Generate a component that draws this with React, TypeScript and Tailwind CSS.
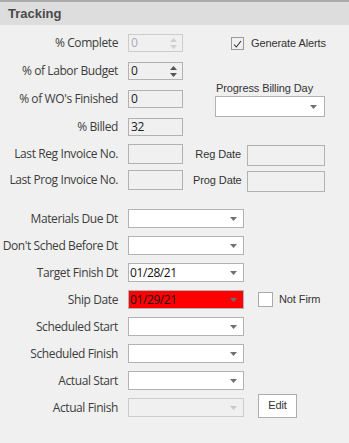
import React from "react";

const labelCls = "w-[118px] shrink-0 text-right whitespace-nowrap";
const sysFont = "font-['Liberation_Sans',sans-serif] text-[11px] tracking-[-0.1px] text-[#333]";

function Caret({ light }: { light?: boolean }) {
  return (
    <svg width="7" height="4" viewBox="0 0 7 4" className="shrink-0">
      <path d="M0 0h7L3.5 4z" fill={light ? "#c8c8c8" : "#707070"} />
    </svg>
  );
}

function Row({ label, h, children }: { label: string; h: string; children: React.ReactNode }) {
  return (
    <div className={`flex items-center gap-[10px] ${h}`}>
      <span className={labelCls}>{label}</span>
      {children}
    </div>
  );
}

function TextBox({ value, disabled, spin, w = "w-[55px]", h = "h-[18px]" }: { value?: string; disabled?: boolean; spin?: boolean; w?: string; h?: string }) {
  return (
    <div
      className={`${w} ${h} shrink-0 flex items-center justify-between border px-[2px] ${
        disabled ? "border-[#cccccc] text-[#a6acb6]" : "border-[#b2b2b2] text-[#222]"
      }`}
    >
      <span>{value}</span>
      {spin && (
        <div className="flex flex-col items-center gap-[3px] pr-[3px]">
          <svg width="7" height="4" viewBox="0 0 7 4">
            <path d="M3.5 0L7 4H0z" fill={disabled ? "#cfcfcf" : "#555"} />
          </svg>
          <svg width="7" height="4" viewBox="0 0 7 4">
            <path d="M0 0h7L3.5 4z" fill={disabled ? "#cfcfcf" : "#555"} />
          </svg>
        </div>
      )}
    </div>
  );
}

function DateBox({ value, red, disabled }: { value?: string; red?: boolean; disabled?: boolean }) {
  return (
    <div
      className={`w-[116px] h-[19px] shrink-0 flex items-center justify-between border pl-[1px] pr-[6px] ${
        red ? "bg-[#ff0000] border-[#b2b2b2]" : disabled ? "bg-[#f0f0f0] border-[#cccccc]" : "bg-white border-[#b2b2b2]"
      } text-[#111]`}
    >
      <span>{value}</span>
      <Caret light={disabled} />
    </div>
  );
}

export default function App() {
  return (
    <div className="w-[349px] h-[443px] overflow-hidden bg-[#f0f0f0] font-['Open_Sans',sans-serif] text-[12px] leading-none tracking-[-0.4px] text-[#3c3c3c]">
      <div className="h-[25px] border-t-2 border-[#aaaaaa] bg-[#dddddd] pl-[8px] flex items-center font-['Liberation_Sans',sans-serif] font-bold text-[13px] tracking-normal text-[#4a4a4a]">
        Tracking
      </div>

      <div className="flex mt-[9px]">
        <div className="flex flex-col gap-[10px]">
          <Row label="% Complete" h="h-[18px]">
            <TextBox value="0" disabled spin />
          </Row>
          <Row label="% of Labor Budget" h="h-[18px]">
            <TextBox value="0" spin />
          </Row>
          <Row label="% of WO's Finished" h="h-[18px]">
            <TextBox value="0" />
          </Row>
          <Row label="% Billed" h="h-[18px]">
            <TextBox value="32" />
          </Row>
        </div>

        <div className={`ml-[32px] flex flex-col ${sysFont}`}>
          <label className="ml-[16px] mt-[3px] flex items-center gap-[7px] whitespace-nowrap">
            <span className="w-[13px] h-[13px] border border-[#999] bg-[#f0f0f0] flex items-center justify-center">
              <svg width="9" height="8" viewBox="0 0 9 8">
                <path d="M1 4.5L3.3 7 8 1" fill="none" stroke="#333" strokeWidth="1.1" />
              </svg>
            </span>
            Generate Alerts
          </label>
          <span className="mt-[33px] ml-[1px] whitespace-nowrap">Progress Billing Day</span>
          <div className="mt-[2px] w-[110px] h-[21px] bg-white border border-[#b2b2b2] flex items-center justify-end pr-[7px]">
            <Caret />
          </div>
        </div>
      </div>

      <div className="mt-[8px] flex flex-col gap-[6px]">
        {[
          ["Last Reg Invoice No.", "Reg Date"],
          ["Last Prog Invoice No.", "Prog Date"],
        ].map(([l, d]) => (
          <div key={l} className="flex items-center h-[20px] gap-[10px]">
            <span className={labelCls}>{l}</span>
            <TextBox h="h-[20px]" />
            <span className={`w-[48px] shrink-0 text-right whitespace-nowrap ${sysFont}`}>{d}</span>
            <div className="ml-[-4px] mt-[2px] w-[78px] h-[21px] shrink-0 border border-[#b2b2b2]" />
          </div>
        ))}
      </div>

      <div className="mt-[19px] flex flex-col gap-[8px]">
        <Row label="Materials Due Dt" h="h-[19px]">
          <DateBox />
        </Row>
        <Row label="Don't Sched Before Dt" h="h-[19px]">
          <DateBox />
        </Row>
        <Row label="Target Finish Dt" h="h-[19px]">
          <DateBox value="01/28/21" />
        </Row>
        <Row label="Ship Date" h="h-[19px]">
          <DateBox value="01/29/21" red />
          <label className={`ml-[4px] flex items-center gap-[6px] whitespace-nowrap ${sysFont}`}>
            <span className="w-[15px] h-[15px] border border-[#aaaaaa] bg-white" />
            Not Firm
          </label>
        </Row>
        <Row label="Scheduled Start" h="h-[19px]">
          <DateBox />
        </Row>
        <Row label="Scheduled Finish" h="h-[19px]">
          <DateBox />
        </Row>
        <Row label="Actual Start" h="h-[19px]">
          <DateBox />
        </Row>
        <Row label="Actual Finish" h="h-[19px]">
          <DateBox disabled />
          <button className={`ml-[4px] -mt-[4px] w-[39px] h-[24px] shrink-0 bg-white border border-[#adadad] ${sysFont}`}>
            Edit
          </button>
        </Row>
      </div>
    </div>
  );
}
